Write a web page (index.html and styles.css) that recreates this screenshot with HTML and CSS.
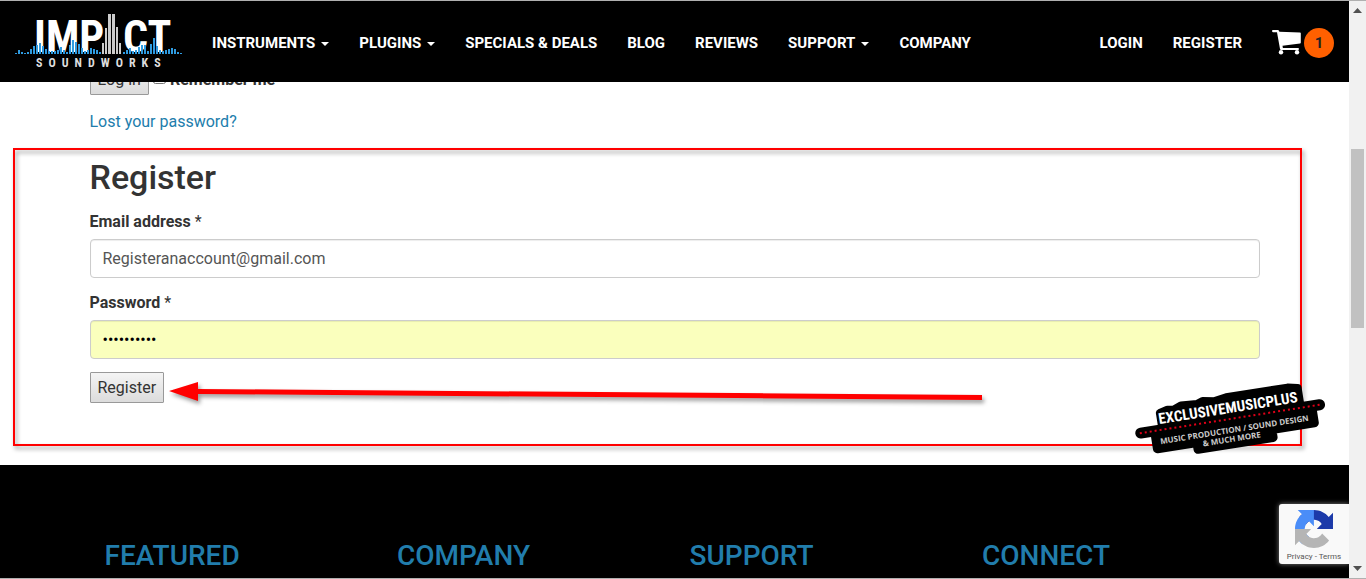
FILE: index.html
```
<!DOCTYPE html>

<html lang="en">

<head>
	<meta charset="UTF-8">
	<meta name="viewport" content="width=device-width, initial-scale=1">
	<title>My Account - Impact Soundworks</title>
	<link rel="stylesheet" href="styles.css">
</head>

<body>

	<div class="page">

		<header class="navbar">
			<a href="#" class="logo">
				<svg width="170" height="64" viewBox="0 0 170 64" role="img" aria-label="Impact Soundworks">
					<g class="logo-name">
						<text x="20" y="42">IMP</text>
						<text x="109" y="42">CT</text>
					</g>
					<path id="skyline" fill="#ccc" d="M88 44V33h2v11zM91 44V18h2v26zM94 44V4h3v40zM98 44V4h3v40zM102 44V17h2v27zM105 44V33h2v11z" />
					<g id="wave" fill="#2f9be0"></g>
					<text class="logo-sub" x="22" y="57">SOUNDWORKS</text>
				</svg>
			</a>

			<nav class="menu">
				<a href="#" class="dropdown">INSTRUMENTS</a>
				<a href="#" class="dropdown">PLUGINS</a>
				<a href="#">SPECIALS &amp; DEALS</a>
				<a href="#">BLOG</a>
				<a href="#">REVIEWS</a>
				<a href="#" class="dropdown">SUPPORT</a>
				<a href="#">COMPANY</a>
			</nav>

			<nav class="menu account">
				<a href="#">LOGIN</a>
				<a href="#">REGISTER</a>
				<a href="#" class="cart" title="Cart">
					<svg width="29" height="25" viewBox="0 0 29 25" fill="#fff">
						<path d="M1 0h5q1 0 1.400 1.800L28 2.500q.8 0 .8.800v9.300q0 .8-.8.900L10.500 15.800l.4 2.200H26q1 0 1 1t-1 1H9.200q-1 0-1.200-1L5 2.200H1Q0 2 0 1.100T1 0z" />
						<circle cx="9" cy="22.200" r="2.200" />
						<circle cx="25" cy="22.200" r="2.200" />
					</svg>
					<span class="badge">1</span>
				</a>
			</nav>
		</header>

		<main class="container">
			<form class="login">
				<button type="button">Log in</button>
				<input type="checkbox" id="rememberme" name="rememberme" />
				<label for="rememberme">Remember me</label>
			</form>
			<p class="lost"><a href="#">Lost your password?</a></p>

			<form class="register">
				<h2>Register</h2>
				<label for="email">Email address <span>*</span></label>
				<input type="email" id="email" name="email" value="Registeranaccount@gmail.com" />
				<label for="password">Password <span>*</span></label>
				<input type="password" id="password" name="password" class="autofilled" value="0123456789" />
				<button type="button">Register</button>
			</form>
		</main>

		<footer>
			<div class="container columns">
				<h3>FEATURED</h3>
				<h3>COMPANY</h3>
				<h3>SUPPORT</h3>
				<h3>CONNECT</h3>
			</div>
		</footer>

		<!-- annotations -->
		<div class="frame"></div>

		<svg class="arrow" width="820" height="30" viewBox="0 0 820 30">
			<path fill="#f00" d="M0 10L29 1v7l784 6v5L29 13v7z" />
		</svg>

		<svg class="sticker" width="194" height="80" viewBox="0 0 194 80">
			<g transform="rotate(-9 97 40)">
				<g stroke="#000" stroke-linejoin="round">
					<path stroke-width="8" d="M29 21l8-2 6 1 8-3 16 1 6-2 12 2 12-2h62l10 2v16H29z" />
					<path stroke-width="11" stroke-linecap="round" d="M7 38H188" />
					<path stroke-width="9" d="M21 40H180v15H137v8H61v-7H21z" />
				</g>
				<text class="sticker-name" x="97" y="32">EXCLUSIVEMUSICPLUS</text>
				<path stroke="#e00018" stroke-width="2" stroke-dasharray="2 3" d="M6 38H189" />
				<text class="sticker-sub" x="100" y="52">MUSIC PRODUCTION / SOUND DESIGN</text>
				<text class="sticker-sub" x="96" y="61">&amp; MUCH MORE</text>
			</g>
		</svg>

		<!-- recaptcha -->
		<div class="recaptcha">
			<svg width="38" height="38" viewBox="0 0 64 64">
				<path fill="#1c3aa9" d="M64 31.955l-.033-1.370V4.687l-7.160 7.160C50.948 4.674 42.033.093 32.050.093c-10.400 0-19.622 4.960-25.458 12.640l11.736 11.860a15.550 15.550 0 0 1 4.754-5.334c2.050-1.600 4.952-2.906 8.968-2.906.485 0 .860.057 1.135.163 4.976.393 9.288 3.140 11.828 7.124l-8.307 8.307L64 31.953" />
				<path fill="#4a8df8" d="M31.862.094l-1.370.033H4.594l7.160 7.160C4.580 13.147 0 22.060 0 32.046c0 10.400 4.960 19.622 12.640 25.458L24.500 45.768a15.550 15.550 0 0 1-5.334-4.754c-1.600-2.050-2.906-4.952-2.906-8.968 0-.485.057-.860.163-1.135.393-4.976 3.140-9.288 7.124-11.828l8.307 8.307L31.860.095" />
				<path fill="#b5b5b5" d="M.001 32.045l.033 1.370v25.898l7.160-7.160c5.860 7.173 14.774 11.754 24.760 11.754 10.400 0 19.622-4.960 25.458-12.640l-11.736-11.860a15.550 15.550 0 0 1-4.754 5.334c-2.050 1.600-4.952 2.906-8.968 2.906-.485 0-.860-.057-1.135-.163-4.976-.393-9.288-3.140-11.828-7.124l8.307-8.307c-10.522.040-22.400.066-27.295-.005" />
			</svg>
			<div><a href="#">Privacy</a> - <a href="#">Terms</a></div>
		</div>
	</div>

	<div class="scrollbar">
		<svg width="9" height="5" viewBox="0 0 9 5"><path fill="#505050" d="M0 5L4.500 0 9 5z" /></svg>
		<div class="track"><div class="thumb"></div></div>
		<svg width="9" height="5" viewBox="0 0 9 5"><path fill="#505050" d="M0 0h9L4.500 5z" /></svg>
	</div>

	<!-- JS  -->
	<script type="text/javascript" src="wave.js"></script>
</body>

</html>
```
FILE: styles.css
```
*, *:after, *:before { box-sizing: border-box; }
html, body { height: 100%; margin: 0; padding: 0; }
body { display: flex; border: 1px solid #b0b0b0; border-width: 1px 0; overflow: hidden; background: #fff; color: #333; font: 16px/22px Roboto, sans-serif; }
a { color: #217dac; text-decoration: none; }
h2, h3, p { margin: 0; }
h2, h3 { font-weight: 500; }

.page { position: relative; flex: 1; min-width: 0; overflow: hidden; display: flex; flex-direction: column; }
.container { width: 100%; max-width: 1170px; margin: 0 auto; }

/* navbar */
.navbar { position: absolute; z-index: 1; top: 0; left: 0; right: 0; height: 81px; padding: 0 15px 0 14px; display: flex; align-items: center; background: #000; }
.navbar a { color: #fff; }
.logo { display: flex; }
.logo svg { overflow: visible; }
.logo-name { font: bold 44px "Roboto Condensed", "Liberation Sans Narrow", sans-serif; fill: #fff; }
.logo-sub { font: bold 12px "Roboto Condensed", "Liberation Sans Narrow", sans-serif; letter-spacing: 6px; fill: #ddd; }
.menu { display: flex; align-items: center; gap: 30px; margin-left: 28px; padding-top: 2px; font-size: 15px; font-weight: 700; white-space: nowrap; }
.account { margin-left: auto; }
.dropdown:after { content: ''; display: inline-block; margin-left: 6px; vertical-align: middle; border: 4px solid transparent; border-top-color: #fff; border-bottom: 0; }
.cart { display: flex; align-items: center; gap: 3px; }
.badge { width: 30px; height: 30px; border-radius: 50%; background: #ff6000; color: #222; line-height: 30px; text-align: center; }

/* forms */
main { padding: 63px 0 62px; }
button { height: 31px; padding: 0 7px; border: 1px solid #999; border-radius: 1px; background: linear-gradient(#f4f4f4, #dcdcdc); color: #333; font: inherit; }
label { font-weight: 700; }
label span { font-weight: 400; }
.login { display: flex; align-items: center; }
.login input { width: 13px; height: 13px; margin: 0 4px 4px; }
.lost { margin-top: 16px; }
.register { margin-top: 24px; display: flex; flex-direction: column; align-items: flex-start; }
.register h2 { font-size: 34px; line-height: 40px; }
.register label { margin: 14px 0 6px; }
.register input { width: 100%; height: 39px; padding: 0 12px; border: 1px solid #ccc; border-radius: 4px; background: #fff; box-shadow: inset 0 1px 1px #00000013; color: #555; font: inherit; }
.register input.autofilled { background: #faffbd; color: #000; }
.register button { margin-top: 13px; }

/* footer */
footer { flex: 1 0 auto; padding-top: 74px; background: #000; }
.columns { display: grid; grid-template-columns: repeat(4, 1fr); }
.columns h3 { padding: 0 15px; color: #217dac; font-size: 28px; line-height: 34px; }

/* annotations */
.frame { position: absolute; top: 147px; left: 13px; right: 47px; height: 298px; border: 2px solid #f00; filter: drop-shadow(2px 3px 2px #0006); pointer-events: none; }
.arrow { position: absolute; top: 380px; left: 169px; filter: drop-shadow(2px 3px 2px #0006); pointer-events: none; }
.sticker { position: absolute; top: 380px; right: 22px; overflow: visible; pointer-events: none; }
.sticker-name { font: bold 15px "Roboto Condensed", "Liberation Sans Narrow", sans-serif; fill: #fff; text-anchor: middle; }
.sticker-sub { font: bold 8px "Open Sans", sans-serif; fill: #ccc; text-anchor: middle; }

/* recaptcha */
.recaptcha { position: absolute; right: 0; bottom: 14px; width: 70px; height: 60px; padding-top: 6px; border-radius: 3px 0 0 3px; background: #f9f9f9; box-shadow: 0 0 5px #808080; text-align: center; font-size: 8px; line-height: 16px; }
.recaptcha svg { display: block; margin: 0 auto 1px; }
.recaptcha, .recaptcha a { color: #555; }

/* scrollbar */
.scrollbar { flex: none; width: 17px; padding: 7px 0; display: flex; flex-direction: column; align-items: center; background: #f1f1f1; }
.track { flex: 1; width: 13px; padding: 136px 0 0; }
.thumb { height: 179px; background: #c1c1c1; }
```
FILE: wave.js
```
// bar heights of the logo waveform, 0 leaves room for the skyline
var heights = [1, 4, 2, 1, 2, 5, 8, 9, 11, 8, 5, 3, 3, 3, 4, 7, 4, 2, 9, 14, 12, 10, 6, 3, 4, 6, 5, 4, 2,
	0, 0, 0, 0, 0, 0, 0, 2, 4, 6, 3, 4, 7, 9, 9, 3, 10, 16, 8, 4, 3, 4, 5, 6, 5, 2, 1];
var wave = document.getElementById('wave');

heights.forEach(function (h, i) {
	var bar = document.createElementNS('http://www.w3.org/2000/svg', 'rect');
	bar.setAttribute('x', 1 + i * 3);
	bar.setAttribute('y', 44 - h);
	bar.setAttribute('width', 2);
	bar.setAttribute('height', h);
	wave.appendChild(bar);
});
```
